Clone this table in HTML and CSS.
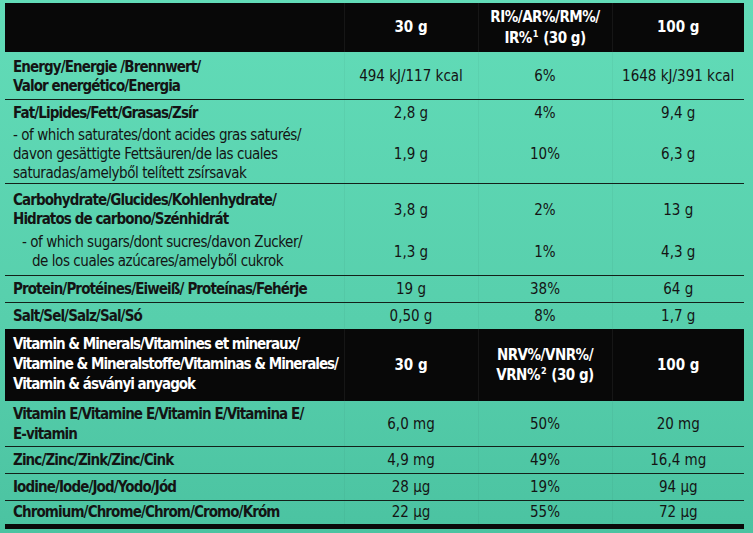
FILE: index.html
```html
<!DOCTYPE html>
<html lang="en">
<head>
<meta charset="utf-8">
<title>Nutrition facts</title>
<link rel="stylesheet" href="styles.css">
</head>
<body>
<table class="nut">
  <colgroup>
    <col class="c-label"><col class="c-val"><col class="c-val"><col class="c-val3">
  </colgroup>
  <tr class="head head-top">
    <th class="lbl"></th>
    <th>30 g</th>
    <th class="pct">RI%/AR%/RM%/<br>IR%<sup>1</sup> (30 g)</th>
    <th>100 g</th>
  </tr>
  <tr class="r-energy line">
    <td class="lbl b">Energy/Energie /Brennwert/<br>Valor energético/Energia</td>
    <td>494 kJ/117 kcal</td>
    <td>6%</td>
    <td>1648 kJ/391 kcal</td>
  </tr>
  <tr class="r-fat">
    <td class="lbl b">Fat/Lipides/Fett/Grasas/Zsír</td>
    <td>2,8 g</td>
    <td>4%</td>
    <td>9,4 g</td>
  </tr>
  <tr class="r-fatsub line">
    <td class="lbl">- of which saturates/dont acides gras saturés/<br>davon gesättigte Fettsäuren/de las cuales<br>saturadas/amelyből telített zsírsavak</td>
    <td>1,9 g</td>
    <td>10%</td>
    <td>6,3 g</td>
  </tr>
  <tr class="r-carb">
    <td class="lbl b">Carbohydrate/Glucides/Kohlenhydrate/<br>Hidratos de carbono/Szénhidrát</td>
    <td>3,8 g</td>
    <td>2%</td>
    <td>13 g</td>
  </tr>
  <tr class="r-carbsub line">
    <td class="lbl"><span class="sub">- of which sugars/dont sucres/davon Zucker/<br><span class="cont">de los cuales azúcares/amelyből cukrok</span></span></td>
    <td>1,3 g</td>
    <td>1%</td>
    <td>4,3 g</td>
  </tr>
  <tr class="r-single line">
    <td class="lbl b">Protein/Protéines/Eiweiß/ Proteínas/Fehérje</td>
    <td>19 g</td>
    <td>38%</td>
    <td>64 g</td>
  </tr>
  <tr class="r-single">
    <td class="lbl b">Salt/Sel/Salz/Sal/Só</td>
    <td>0,50 g</td>
    <td>8%</td>
    <td>1,7 g</td>
  </tr>
  <tr class="head head-vit">
    <th class="lbl">Vitamin &amp; Minerals/Vitamines et mineraux/<br>Vitamine &amp; Mineralstoffe/Vitaminas &amp; Minerales/<br>Vitamin &amp; ásványi anyagok</th>
    <th>30 g</th>
    <th class="pct">NRV%/VNR%/<br>VRN%<sup>2</sup> (30 g)</th>
    <th>100 g</th>
  </tr>
  <tr class="r-vite line">
    <td class="lbl b">Vitamin E/Vitamine E/Vitamin E/Vitamina E/<br>E-vitamin</td>
    <td>6,0 mg</td>
    <td>50%</td>
    <td>20 mg</td>
  </tr>
  <tr class="r-single line">
    <td class="lbl b">Zinc/Zinc/Zink/Zinc/Cink</td>
    <td>4,9 mg</td>
    <td>49%</td>
    <td>16,4 mg</td>
  </tr>
  <tr class="r-single line">
    <td class="lbl b">Iodine/Iode/Jod/Yodo/Jód</td>
    <td>28 µg</td>
    <td>19%</td>
    <td>94 µg</td>
  </tr>
  <tr class="r-last">
    <td class="lbl b">Chromium/Chrome/Chrom/Cromo/Króm</td>
    <td>22 µg</td>
    <td>55%</td>
    <td>72 µg</td>
  </tr>
</table>
</body>
</html>
```

FILE: styles.css
```css
html, body {
  margin: 0;
  height: 100%;
}
body {
  padding: 3px 0 0 5px;
  box-sizing: border-box;
  background: linear-gradient(180deg, #62dcb8 0%, #57cfac 60%, #4bc3a1 100%);
  font-family: "DejaVu Sans Condensed", "Liberation Sans", sans-serif;
  font-size: 15px;
  color: #141414;
}
.nut {
  border-collapse: collapse;
  table-layout: fixed;
  width: 739px;
}
.c-label { width: 339px; }
.c-val { width: 134px; }
.c-val3 { width: 132px; }

.nut td, .nut th {
  padding: 0;
  text-align: center;
  vertical-align: middle;
  line-height: 19px;
  white-space: nowrap;
  border-left: 1px solid rgba(0, 0, 0, 0.035);
}
.nut .lbl {
  text-align: left;
  padding-left: 8px;
  border-left: none;
  letter-spacing: -0.45px;
}
.nut .lbl.b { letter-spacing: -0.9px; }
.head .lbl { letter-spacing: -1px; }
.b { font-weight: bold; }

.head th {
  background: #080808;
  color: #fff;
  font-weight: bold;
  line-height: 21px;
  border-left-color: rgba(255, 255, 255, 0.06);
}
.head .pct { letter-spacing: -0.5px; }
.head-top th { height: 49px; }
.head-vit th { height: 70px; line-height: 20px; }
.head-vit .lbl { line-height: 20px; padding-bottom: 2px; }
sup {
  font-size: 9px;
  line-height: 0;
  vertical-align: 6px;
  padding: 0 1px;
}

.line td { border-bottom: 1px solid #132019; }

.r-energy td { height: 45px; padding-top: 2px; }
.r-fat td { height: 19px; padding-top: 4px; padding-bottom: 2px; }
.r-fatsub td { height: 57px; padding-top: 1px; }
.r-carb td { height: 38px; padding-top: 7px; padding-bottom: 3px; }
.r-carbsub td { height: 38px; padding-top: 1px; padding-bottom: 4px; }
.sub { display: inline-block; padding-left: 9px; }
.cont { padding-left: 10px; }
.r-single td { height: 26px; }
.r-vite td { height: 45px; line-height: 20px; }
.r-last td {
  height: 23px;
  border-bottom: 5px solid #0a0a0a;
}
```
